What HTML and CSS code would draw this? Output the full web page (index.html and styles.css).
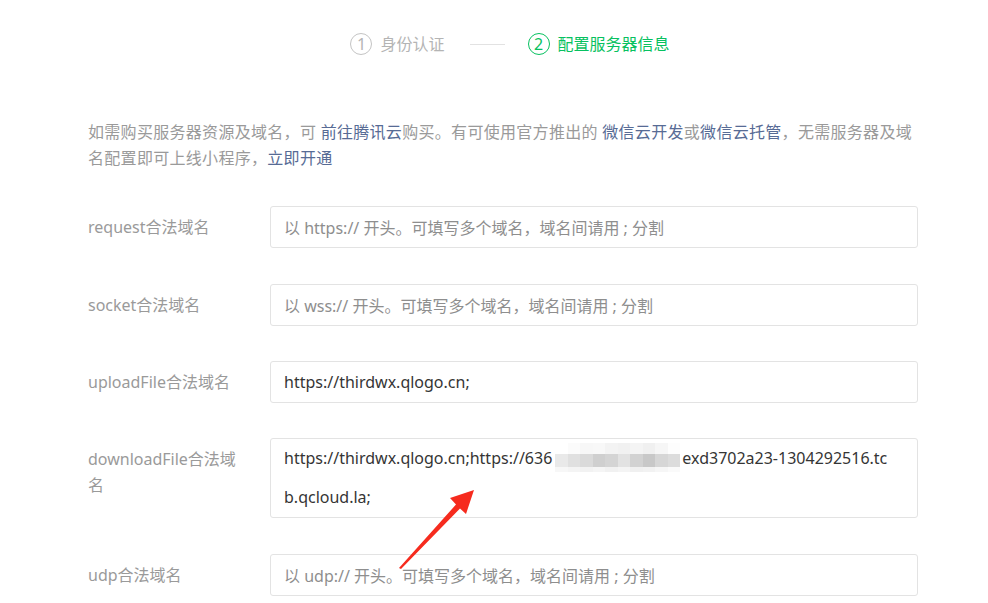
FILE: index.html
```html
<!DOCTYPE html>
<html lang="zh-CN">
<head>
<meta charset="utf-8">
<title>配置服务器信息</title>
<link rel="stylesheet" href="styles.css">
</head>
<body>
<div class="page">
  <div class="steps">
    <div class="step">
      <span class="num">1</span>
      <span class="step-name">身份认证</span>
    </div>
    <span class="step-line"></span>
    <div class="step active">
      <span class="num">2</span>
      <span class="step-name">配置服务器信息</span>
    </div>
  </div>

  <p class="intro">如需购买服务器资源及域名，可 <a href="#">前往腾讯云</a>购买。有可使用官方推出的 <a href="#">微信云开发</a>或<a href="#">微信云托管</a>，无需服务器及域名配置即可上线小程序，<a href="#">立即开通</a></p>

  <div class="form">
    <div class="row">
      <div class="label">request合法域名</div>
      <div class="field placeholder">以 https:// 开头。可填写多个域名，域名间请用 ; 分割</div>
    </div>
    <div class="row">
      <div class="label">socket合法域名</div>
      <div class="field placeholder">以 wss:// 开头。可填写多个域名，域名间请用 ; 分割</div>
    </div>
    <div class="row row-tight">
      <div class="label">uploadFile合法域名</div>
      <div class="field">https://thirdwx.qlogo.cn;</div>
    </div>
    <div class="row row-tight">
      <div class="label">downloadFile合法域名</div>
      <div class="field area">
        <div class="area-line">https://thirdwx.qlogo.cn;https://636<span class="mosaic"><i class="m1"></i><i class="m2"></i><i class="m3"></i><i class="m4"></i><i class="m5"></i><i class="m6"></i><i class="m7"></i><i class="m8"></i><i class="m9"></i><i class="m10"></i><i class="m11"></i><i class="m12"></i><i class="m13"></i><i class="m14"></i><i class="m15"></i><i class="m16"></i><i class="m17"></i><i class="m18"></i><i class="m19"></i><i class="m20"></i><i class="m21"></i><i class="m22"></i><i class="m23"></i><i class="m24"></i><i class="m25"></i><i class="m26"></i><i class="m27"></i><i class="m28"></i><i class="m29"></i><i class="m30"></i></span>exd3702a23-1304292516.tc</div>
        <div class="area-line">b.qcloud.la;</div>
      </div>
    </div>
    <div class="row">
      <div class="label">udp合法域名</div>
      <div class="field placeholder">以 udp:// 开头。可填写多个域名，域名间请用 ; 分割</div>
    </div>
  </div>

  <svg class="arrow" width="988" height="603" viewBox="0 0 988 603" aria-hidden="true">
    <polygon points="399,568 456,504.5 450,498 474,490 466,514 460,508.5 401,569" fill="#f62b1e"/>
  </svg>
</div>
</body>
</html>
```

FILE: styles.css
```css
html, body {
  margin: 0;
  background: #ffffff;
}

body {
  font-family: "Noto Sans", "Noto Sans CJK SC", sans-serif;
  width: 988px;
  height: 603px;
  overflow: hidden;
}

.page {
  position: relative;
  width: 830px;
  padding: 33px 70px 0 88px;
}

.steps {
  display: flex;
  align-items: center;
  justify-content: center;
  padding-left: 14px;
  height: 22px;
}

.step {
  display: flex;
  align-items: center;
  gap: 8px;
  font-size: 16px;
  line-height: 22px;
  color: #b4b4b4;
}

.num {
  width: 20px;
  height: 20px;
  border: 1px solid #c4c4c4;
  border-radius: 50%;
  display: flex;
  align-items: center;
  justify-content: center;
  font-size: 16px;
  line-height: 20px;
}

.step.active {
  color: #07c160;
}

.step.active .num {
  border-color: #07c160;
}

.step-line {
  width: 35px;
  height: 1px;
  background: #e2e2e2;
  margin: 0 23px 0 25px;
}

.intro {
  margin: 64px 0 0;
  font-size: 16px;
  line-height: 26px;
  letter-spacing: 0.3px;
  color: #9a9a9a;
}

.intro a {
  color: #576b95;
  text-decoration: none;
}

.form {
  margin-top: 35px;
  display: flex;
  flex-direction: column;
  gap: 36px;
}

.row {
  display: flex;
  align-items: flex-start;
}

.row-tight {
  margin-top: -1px;
}

.label {
  flex: none;
  width: 160px;
  padding: 8px 22px 0 0;
  font-size: 16px;
  line-height: 26px;
  color: #9a9a9a;
}

.field {
  flex: 1;
  box-sizing: border-box;
  height: 42px;
  border: 1px solid #e3e3e3;
  border-radius: 3px;
  padding: 0 13px;
  display: flex;
  align-items: center;
  font-size: 16px;
  color: #353535;
  white-space: nowrap;
}

.field.placeholder {
  color: #8e8e8e;
}

.field.area {
  display: block;
  height: 80px;
  line-height: 39px;
  overflow: hidden;
}

.area-line {
  height: 39px;
  white-space: nowrap;
}

.mosaic {
  display: inline-grid;
  grid-template-columns: repeat(10, 12.5px);
  grid-template-rows: 11px 13px 5px;
  vertical-align: top;
  width: 125px;
  margin: 4px 2px 0 3px;
  line-height: 0;
}

.mosaic i { display: block; }
.m1 { background: #ffffff; } .m2 { background: #fbfbfb; } .m3 { background: #f7f7f7; } .m4 { background: #f8f8f8; } .m5 { background: #f3f3f3; }
.m6 { background: #f1f1f1; } .m7 { background: #f4f4f4; } .m8 { background: #f0f0f0; } .m9 { background: #f6f6f6; } .m10 { background: #fdfdfd; }
.m11 { background: #e9e9e9; } .m12 { background: #e0e0e0; } .m13 { background: #dadada; } .m14 { background: #cfcfcf; } .m15 { background: #d4d4d4; }
.m16 { background: #e2e2e2; } .m17 { background: #d2d2d2; } .m18 { background: #c8c8c8; } .m19 { background: #d6d6d6; } .m20 { background: #dcdcdc; }
.m21 { background: #f7f7f7; } .m22 { background: #f4f4f4; } .m23 { background: #f2f2f2; } .m24 { background: #f5f5f5; } .m25 { background: #f1f1f1; }
.m26 { background: #f4f4f4; } .m27 { background: #f0f0f0; } .m28 { background: #f2f2f2; } .m29 { background: #f6f6f6; } .m30 { background: #fafafa; }

.arrow {
  position: absolute;
  left: 0;
  top: 0;
  pointer-events: none;
}
```
